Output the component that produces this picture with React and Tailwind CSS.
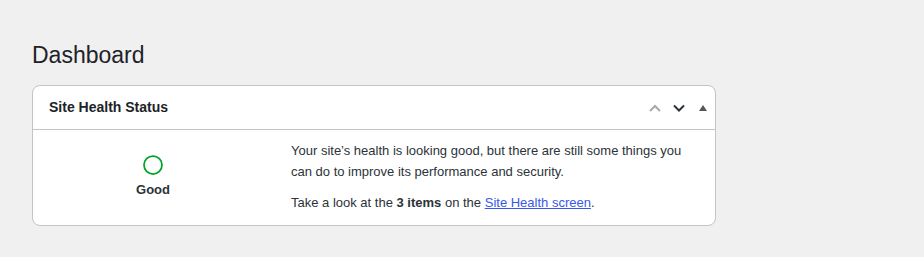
export default function App() {
  return (
    <div className="min-h-screen w-full bg-[#f0f0f1] text-[#1d2327]" style={{ fontFamily: '"Liberation Sans", Arial, sans-serif' }}>
      <div className="pl-[32px] pt-[41px]">
        <h1 className="text-[23px] leading-[29px] font-normal text-[#1d2327]">Dashboard</h1>
        <div className="mt-[15px] w-[684px] rounded-[8px] border border-[#c3c4c7] bg-white">
          <div className="flex h-[44px] items-center justify-between border-b border-[#c3c4c7] pl-[16px]">
            <h2 className="text-[14px] font-bold text-[#1d2327]">Site Health Status</h2>
            <div className="flex items-center">
              <button className="flex h-[24px] w-[24px] items-center justify-center text-[#a7aaad]">
                <svg width="16" height="16" viewBox="0 0 16 16" fill="none" stroke="currentColor" strokeWidth="2">
                  <path d="M3 11l5-5 5 5" />
                </svg>
              </button>
              <button className="flex h-[24px] w-[24px] items-center justify-center text-[#2c3338]">
                <svg width="16" height="16" viewBox="0 0 16 16" fill="none" stroke="currentColor" strokeWidth="2">
                  <path d="M3 5.5l5 5 5-5" />
                </svg>
              </button>
              <button className="flex h-[24px] w-[24px] items-center justify-center text-[#50575e]">
                <svg width="10" height="8" viewBox="0 0 10 8" fill="currentColor">
                  <path d="M1 7h8L5 1z" />
                </svg>
              </button>
            </div>
          </div>
          <div className="flex pb-[12px] pt-[10px]">
            <div className="flex w-[240px] flex-col items-center pt-[14px]">
              <svg width="22" height="22" viewBox="0 0 22 22">
                <circle cx="11" cy="11" r="9" fill="none" stroke="#00a32a" strokeWidth="1.75" />
              </svg>
              <div className="mt-[4px] text-[13px] font-bold text-[#2c3338]">Good</div>
            </div>
            <div className="w-[420px] pl-[18px] text-[13px] leading-[21px] text-[#2c3338]">
              <p>Your site’s health is looking good, but there are still some things you can do to improve its performance and security.</p>
              <p className="mt-[10px]">
                Take a look at the <strong>3 items</strong> on the{" "}
                <a href="#" className="text-[#3858e9] underline">Site Health screen</a>.
              </p>
            </div>
          </div>
        </div>
      </div>
    </div>
  );
}
